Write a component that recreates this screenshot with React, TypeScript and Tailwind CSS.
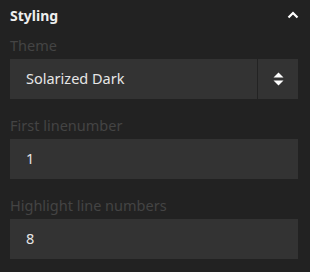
export default function App() {
  const font = { fontFamily: '"Noto Sans", "Open Sans", sans-serif' }
  return (
    <div className="w-[310px] h-[272px] bg-[#222222] pl-[10px] pr-[12px] pt-[5px] text-[14.5px]" style={font}>
      {/* Header */}
      <div className="flex items-center justify-between h-[20px]">
        <span className="font-bold text-[14px] text-[#eeeeee]">Styling</span>
        <svg className="w-[12px] h-[8px] mr-[-1px]" viewBox="0 0 12 8">
          <path d="M1.5 6.5 L6 2 L10.5 6.5" fill="none" stroke="#ffffff" strokeWidth="2.2" />
        </svg>
      </div>

      <div className="mt-[10px] flex flex-col gap-[16px]">
        <div className="flex flex-col gap-[4px]">
          <label className="h-[20px] leading-[20px] text-[#444444]">Theme</label>
          <div className="flex h-[40px] bg-[#333333]">
            <div className="flex-1 flex items-center pl-[16px] text-[#e6e6e6]">Solarized Dark</div>
            <div className="w-[1px] bg-[#232323]" />
            <div className="w-[40px] flex items-center justify-center">
              <svg className="w-[11px] h-[14px]" viewBox="0 0 11 14">
                <path d="M5.5 0.5 L10.5 5.5 L0.5 5.5 Z" fill="#ffffff" />
                <path d="M0.5 8.5 L10.5 8.5 L5.5 13.5 Z" fill="#ffffff" />
              </svg>
            </div>
          </div>
        </div>

        <div className="flex flex-col gap-[4px]">
          <label className="h-[20px] leading-[20px] text-[#444444]">First linenumber</label>
          <div className="flex items-center h-[40px] bg-[#333333] pl-[16px] text-[#e6e6e6]">1</div>
        </div>

        <div className="flex flex-col gap-[4px]">
          <label className="h-[20px] leading-[20px] text-[#444444]">Highlight line numbers</label>
          <div className="flex items-center h-[40px] bg-[#333333] pl-[16px] text-[#e6e6e6]">8</div>
        </div>
      </div>
    </div>
  )
}
